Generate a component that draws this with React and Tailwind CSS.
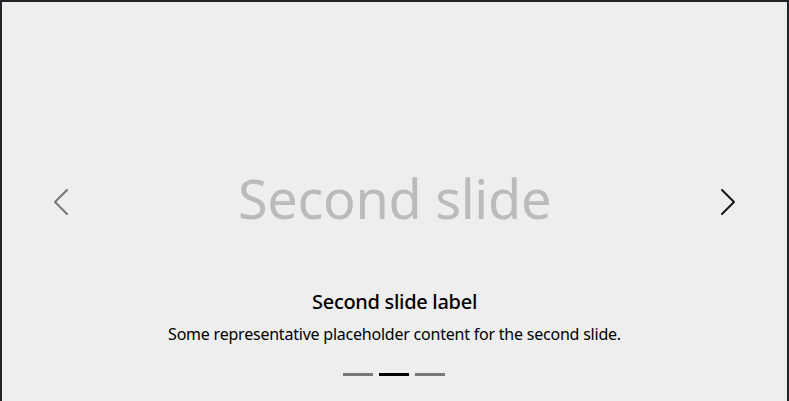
function Chevron({ dir }) {
  const d =
    dir === "prev"
      ? "M11.354 1.646a.5.5 0 0 1 0 .708L5.707 8l5.647 5.646a.5.5 0 0 1-.708.708l-6-6a.5.5 0 0 1 0-.708l6-6a.5.5 0 0 1 .708 0z"
      : "M4.646 1.646a.5.5 0 0 1 .708 0l6 6a.5.5 0 0 1 0 .708l-6 6a.5.5 0 0 1-.708-.708L10.293 8 4.646 2.354a.5.5 0 0 1 0-.708z";
  return (
    <svg viewBox="0 0 16 16" className="w-8 h-8" fill="#000">
      <path d={d} />
    </svg>
  );
}

export default function App() {
  return (
    <div className="font-['Noto_Sans',sans-serif] text-[#212529]">
      <div className="relative box-content h-[400px] border-2 border-[#212529] bg-[#eeeeee] overflow-hidden">
        <div className="flex h-full items-center justify-center pb-[8px]">
          <span className="text-[54px] text-[#bbbbbb] leading-none tracking-[-0.3px]">Second slide</span>
        </div>

        <button className="absolute top-0 bottom-0 left-0 w-[15%] flex items-center justify-center opacity-50">
          <Chevron dir="prev" />
        </button>
        <button className="absolute top-0 bottom-0 right-0 w-[15%] flex items-center justify-center opacity-90">
          <Chevron dir="next" />
        </button>

        <div className="absolute left-[15%] right-[15%] bottom-5 py-5 text-center text-black">
          <h5 className="text-[20px] font-medium leading-[1.2] mb-2 tracking-[-0.3px]">Second slide label</h5>
          <p className="text-base leading-6 mb-4 tracking-[-0.22px]">Some representative placeholder content for the second slide.</p>
        </div>

        <div className="absolute left-0 right-[1px] bottom-0 mb-4 flex justify-center">
          <span className="mx-[3px] w-[30px] h-[3px] my-[10px] bg-black opacity-50" />
          <span className="mx-[3px] w-[30px] h-[3px] my-[10px] bg-black" />
          <span className="mx-[3px] w-[30px] h-[3px] my-[10px] bg-black opacity-50" />
        </div>
      </div>
    </div>
  );
}
